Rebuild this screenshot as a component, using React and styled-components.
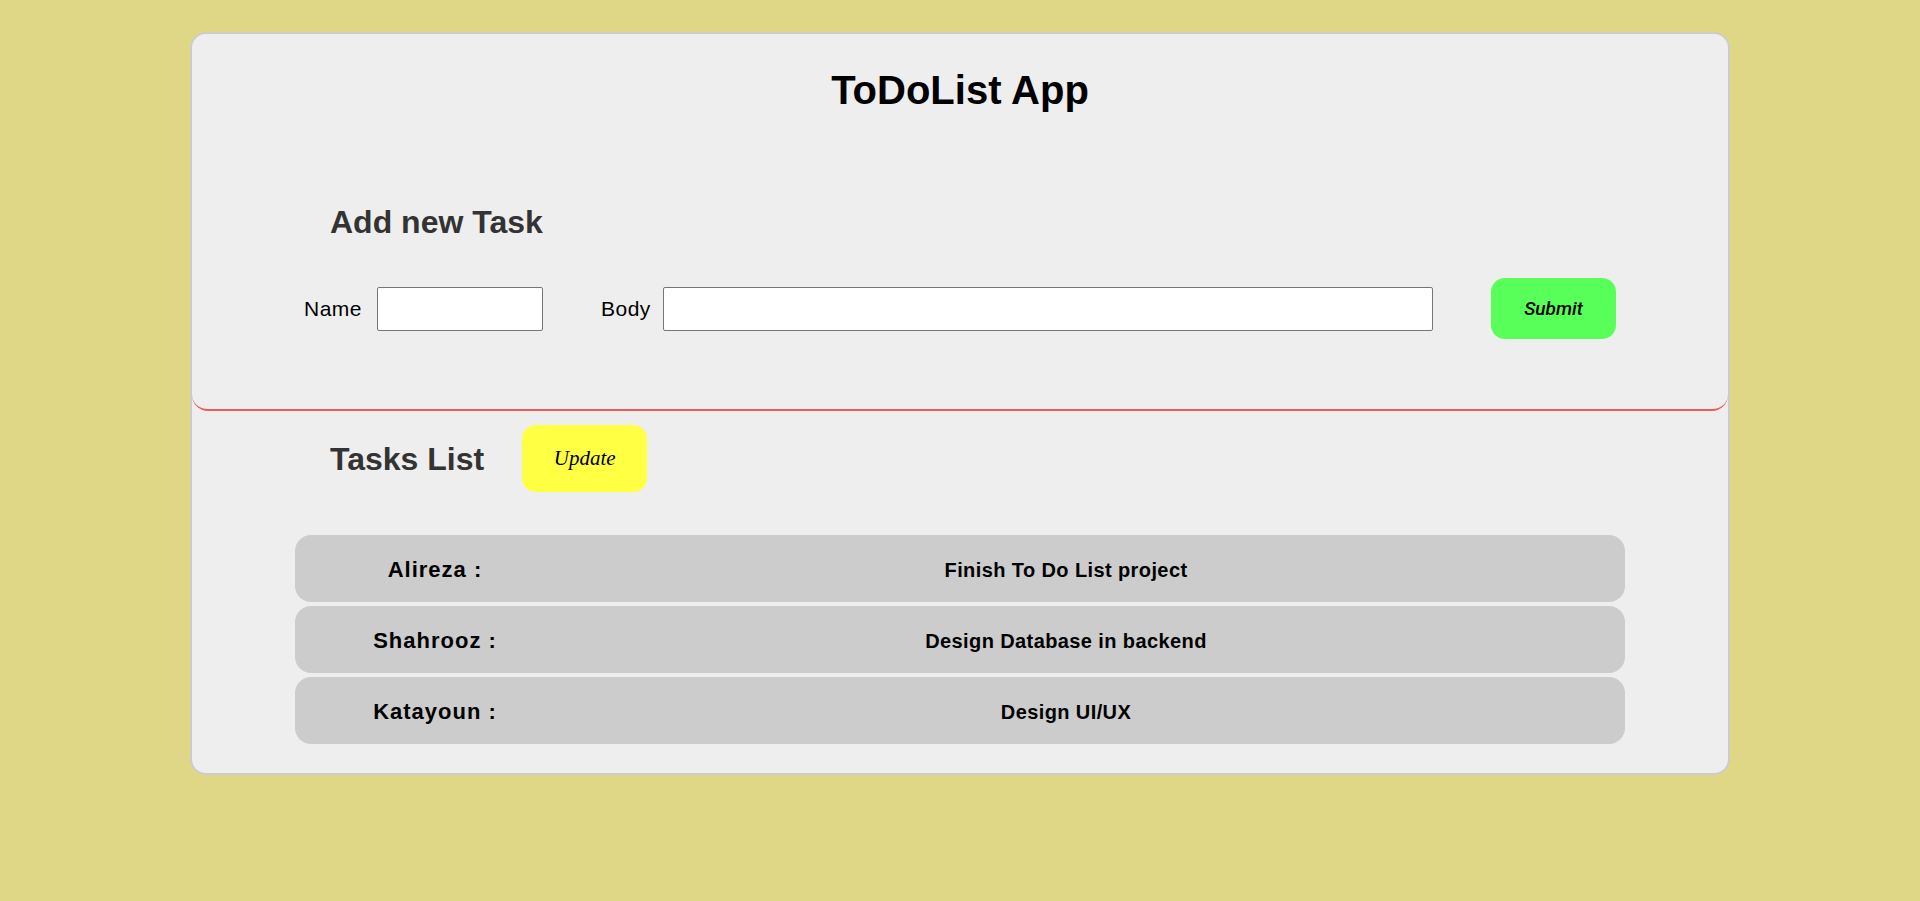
import React from "react";
import styled, { createGlobalStyle } from "styled-components";

const tasks = [
    { name: "Alireza", body: "Finish To Do List project" },
    { name: "Shahrooz", body: "Design Database in backend" },
    { name: "Katayoun", body: "Design UI/UX" }
];

const GlobalStyle = createGlobalStyle`
    body {
        margin: 0;
        background: #dfd785;
        font-family: "Comic Sans MS", "Liberation Sans", sans-serif;
    }
`;

export default function App() {
    return (
        <>
            <GlobalStyle />
            <Card>
                <TopSection>
                    <Title>ToDoList App</Title>
                    <AddHeader>Add new Task</AddHeader>
                    <Form onSubmit={(e) => e.preventDefault()}>
                        <Field>
                            <Label $w="59px">Name</Label>
                            <TextInput $w="166px" />
                        </Field>
                        <Field>
                            <Label $w="48px">Body</Label>
                            <TextInput $w="770px" />
                        </Field>
                        <SubmitButton type="submit">Submit</SubmitButton>
                    </Form>
                </TopSection>

                <BottomSection>
                    <TasksHeader>
                        <SectionTitle>Tasks List</SectionTitle>
                        <UpdateButton>Update</UpdateButton>
                    </TasksHeader>
                    <TaskList>
                        {tasks.map((t) => (
                            <TaskRow key={t.name}>
                                <TaskName>{t.name} :</TaskName>
                                <TaskBody>{t.body}</TaskBody>
                            </TaskRow>
                        ))}
                    </TaskList>
                </BottomSection>
            </Card>
        </>
    );
}

const Card = styled.main`
    width: 80%;
    margin: 32px auto 0;
    background: #eeeeee;
    border: 2px solid #cccccc;
    border-radius: 16px;
`;

const TopSection = styled.section`
    padding: 31px 0 70px;
    border-bottom: 2px solid #ee5a5a;
    border-radius: 16px;
`;

const Title = styled.h1`
    margin: 0;
    text-align: center;
    font-size: 40px;
    line-height: 50px;
    font-weight: bold;
    color: #000;
`;

const SectionTitle = styled.h2`
    margin: 0;
    font-size: 32px;
    line-height: 40px;
    font-weight: bold;
    color: #333;
    white-space: nowrap;
`;

const AddHeader = styled(SectionTitle)`
    margin-top: 87px;
    padding-left: 138px;
`;

const Form = styled.form`
    display: flex;
    align-items: center;
    gap: 58px;
    margin-top: 36px;
    padding-left: 112px;
`;

const Field = styled.div`
    display: flex;
    align-items: center;
    gap: 14px;
`;

const Label = styled.label`
    width: ${(p) => p.$w};
    font-size: 21px;
    letter-spacing: 0.5px;
    color: #000;
    white-space: nowrap;
`;

const TextInput = styled.input`
    width: ${(p) => p.$w};
    height: 44px;
    box-sizing: border-box;
    border: 1px solid #767676;
    border-radius: 2px;
    background: #fff;
    font-size: 16px;
    padding: 0 8px;
`;

const SubmitButton = styled.button`
    width: 125px;
    height: 61px;
    border: none;
    border-radius: 14px;
    background: #58ff58;
    font-family: "Roboto", "Liberation Sans", sans-serif;
    font-style: italic;
    font-weight: 500;
    font-size: 19px;
    color: #000;
    cursor: pointer;
`;

const BottomSection = styled.section`
    padding: 14px 0 29px;
`;

const TasksHeader = styled.div`
    display: flex;
    align-items: center;
    gap: 38px;
    padding-left: 138px;
`;

const UpdateButton = styled.button`
    width: 125px;
    height: 67px;
    border: none;
    border-radius: 14px;
    background: #ffff44;
    font-family: "Liberation Serif", serif;
    font-style: italic;
    font-size: 21px;
    color: #000;
    cursor: pointer;
`;

const TaskList = styled.div`
    width: 1330px;
    margin: 43px auto 0;
    display: flex;
    flex-direction: column;
    gap: 4px;
`;

const TaskRow = styled.div`
    height: 67px;
    box-sizing: border-box;
    padding-top: 3px;
    display: grid;
    grid-template-columns: 280px 982px;
    align-items: center;
    background: #cccccc;
    border-radius: 16px;
`;

const TaskName = styled.span`
    text-align: center;
    font-size: 22px;
    letter-spacing: 1px;
    font-weight: bold;
    color: #000;
`;

const TaskBody = styled.span`
    text-align: center;
    font-size: 20px;
    letter-spacing: 0.4px;
    font-weight: bold;
    color: #000;
`;
